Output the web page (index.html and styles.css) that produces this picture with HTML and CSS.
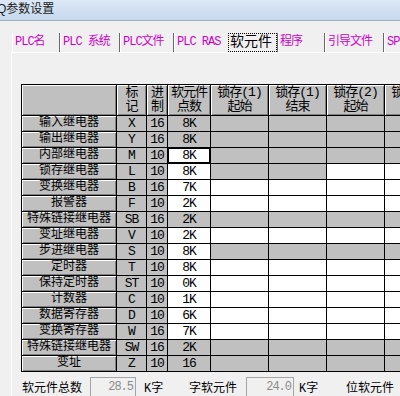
FILE: index.html
```html
<!DOCTYPE html>
<html lang="zh">
<head>
    <meta charset="UTF-8">
    <meta name="viewport" content="width=device-width, initial-scale=1.0">
    <title>Q参数设置</title>
    <link rel="stylesheet" href="styles.css">
</head>
<body>
    <div class="titlebar">Q参数设置</div>

    <div class="tabs">
        <div class="tab w-name">PLC名</div>
        <div class="tab w-sys">PLC 系统</div>
        <div class="tab w-file">PLC文件</div>
        <div class="tab w-ras">PLC RAS</div>
        <div class="tab active"><span class="focus">软元件</span></div>
        <div class="tab w-prog">程序</div>
        <div class="tab w-boot">引导文件</div>
        <div class="tab w-spc">SPC</div>
    </div>

    <div class="panel">
        <table class="grid">
            <colgroup>
                <col class="c-name"><col class="c-mark"><col class="c-radix"><col class="c-count">
                <col class="c-latch"><col class="c-latch"><col class="c-latch"><col class="c-latch">
            </colgroup>
            <tr class="head">
                <td class="cap"></td>
                <td class="cap">标<br>记</td>
                <td class="cap">进<br>制</td>
                <td class="cap">软元件<br>点数</td>
                <td class="cap">锁存(1)<br>起始</td>
                <td class="cap">锁存(1)<br>结束</td>
                <td class="cap">锁存(2)<br>起始</td>
                <td class="cap">锁存(2)<br>结束</td>
            </tr>
            <tr><td class="cap name">输入继电器</td><td class="g">X</td><td class="g">16</td><td class="g">8K</td><td class="g"></td><td class="g"></td><td class="g"></td><td class="g"></td></tr>
            <tr><td class="cap name">输出继电器</td><td class="g">Y</td><td class="g">16</td><td class="g">8K</td><td class="g"></td><td class="g"></td><td class="g"></td><td class="g"></td></tr>
            <tr><td class="cap name">内部继电器</td><td class="g">M</td><td class="g">10</td><td class="sel">8K</td><td class="g"></td><td class="g"></td><td class="g"></td><td class="g"></td></tr>
            <tr><td class="cap name">锁存继电器</td><td class="g">L</td><td class="g">10</td><td>8K</td><td class="g"></td><td class="g"></td><td></td><td></td></tr>
            <tr><td class="cap name">变换继电器</td><td class="g">B</td><td class="g">16</td><td>7K</td><td></td><td></td><td></td><td></td></tr>
            <tr><td class="cap name">报警器</td><td class="g">F</td><td class="g">10</td><td>2K</td><td></td><td></td><td></td><td></td></tr>
            <tr><td class="cap name">特殊链接继电器</td><td class="g">SB</td><td class="g">16</td><td class="g">2K</td><td class="g"></td><td class="g"></td><td class="g"></td><td class="g"></td></tr>
            <tr><td class="cap name">变址继电器</td><td class="g">V</td><td class="g">10</td><td>2K</td><td></td><td></td><td></td><td></td></tr>
            <tr><td class="cap name">步进继电器</td><td class="g">S</td><td class="g">10</td><td>8K</td><td class="g"></td><td class="g"></td><td class="g"></td><td class="g"></td></tr>
            <tr><td class="cap name">定时器</td><td class="g">T</td><td class="g">10</td><td>8K</td><td></td><td></td><td></td><td></td></tr>
            <tr><td class="cap name">保持定时器</td><td class="g">ST</td><td class="g">10</td><td>0K</td><td></td><td></td><td></td><td></td></tr>
            <tr><td class="cap name">计数器</td><td class="g">C</td><td class="g">10</td><td>1K</td><td></td><td></td><td></td><td></td></tr>
            <tr><td class="cap name">数据寄存器</td><td class="g">D</td><td class="g">10</td><td>6K</td><td></td><td></td><td></td><td></td></tr>
            <tr><td class="cap name">变换寄存器</td><td class="g">W</td><td class="g">16</td><td>7K</td><td></td><td></td><td></td><td></td></tr>
            <tr><td class="cap name">特殊链接继电器</td><td class="g">SW</td><td class="g">16</td><td class="g">2K</td><td class="g"></td><td class="g"></td><td class="g"></td><td class="g"></td></tr>
            <tr><td class="cap name">变址</td><td class="g">Z</td><td class="g">10</td><td class="g">16</td><td class="g"></td><td class="g"></td><td class="g"></td><td class="g"></td></tr>
        </table>

        <div class="totals">
            <span class="lbl-total">软元件总数</span>
            <span class="num">28.5</span>
            <span class="unit">K字</span>
            <span class="lbl-word">字软元件</span>
            <span class="num wide">24.0</span>
            <span class="unit unit2">K字</span>
            <span class="lbl-bit">位软元件</span>
        </div>
    </div>
</body>
</html>
```

FILE: styles.css
```css
*{
    margin: 0;
    padding: 0;
}
html, body{
    overflow: hidden;
}
body{
    width: 400px;
    height: 396px;
    background-color: #f0f0f0;
    font-family: "Liberation Mono", "Noto Sans CJK SC", monospace;
    font-size: 12px;
    color: #000;
}

/* window title */
.titlebar{
    height: 20px;
    border-bottom: 1px solid #9eadc0;
    background-image: linear-gradient(#dce8f5, #c6d9ef);
    font-family: "Liberation Sans", "Noto Sans CJK SC", sans-serif;
    font-size: 12px;
    line-height: 18px;
    color: #1b1b1b;
    text-indent: -3px;
    white-space: nowrap;
}

/* tab strip */
.tabs{
    display: flex;
    height: 19px;
    margin: 12px 0 0 12px;
}
.tab{
    box-sizing: border-box;
    height: 19px;
    line-height: 19px;
    padding-left: 2px;
    border-left: 1px solid #fff;
    border-right: 1px solid #696969;
    color: #cc00cc;
    letter-spacing: -1px;
    white-space: nowrap;
    overflow: hidden;
}
.w-name{ width: 48px; }
.w-sys{ width: 60px; }
.w-file{ width: 54px; }
.w-ras{ width: 53px; border-right: 0; }
.w-prog{ width: 47px; padding-left: 1px; }
.w-boot{ width: 59px; }
.w-spc{ flex: 1; border-right: 0; }
.tab.active{
    width: 51px;
    padding-left: 1px;
    border-left: 0;
    color: #000;
    font-size: 14px;
    letter-spacing: 0;
}
.focus{
    display: block;
    height: 17px;
    line-height: 17px;
    padding-left: 1px;
    border: 1px dotted #000;
}

/* page panel */
.panel{
    margin-left: 11px;
    border-top: 1px solid #fff;
    border-left: 1px solid #fff;
    padding: 31px 0 0 9px;
}

/* device grid */
.grid{
    table-layout: fixed;
    width: 422px;
    border-spacing: 1px;
    background-color: #000;
    font-size: 13px;
    letter-spacing: -1px;
}
.c-name{ width: 94px; }
.c-mark{ width: 29px; }
.c-radix{ width: 20px; }
.c-count{ width: 42px; }
.c-latch{ width: 57px; }
.grid td{
    height: 15px;
    line-height: 15px;
    background-color: #fff;
    text-align: center;
    white-space: nowrap;
    overflow: hidden;
}
.grid .head td{
    height: 30px;
    line-height: 14px;
    vertical-align: middle;
}
.grid td.g{
    background-color: #c0c0c0;
}
.grid td.cap{
    background-color: #c0c0c0;
    box-shadow: inset 1px 1px #fff, inset -1px -1px #808080;
}
.grid td.name{
    font-size: 12px;
    letter-spacing: 0;
}
.grid td.sel{
    box-shadow: inset 0 0 0 1px #000;
}

/* totals line */
.totals{
    display: flex;
    align-items: center;
    height: 20px;
    margin-top: 5px;
    padding-left: 1px;
    white-space: nowrap;
}
.lbl-total{
    width: 68px;
}
.num{
    box-sizing: border-box;
    width: 46px;
    height: 20px;
    border: 1px solid #a5a5a5;
    padding-right: 2px;
    line-height: 18px;
    text-align: right;
    color: #8a8a8a;
    letter-spacing: -1px;
}
.num.wide{
    width: 48px;
}
.unit{
    width: 45px;
    margin-left: 8px;
}
.unit2{
    width: 47px;
    margin-left: 5px;
}
.lbl-word{
    width: 57px;
}
```
